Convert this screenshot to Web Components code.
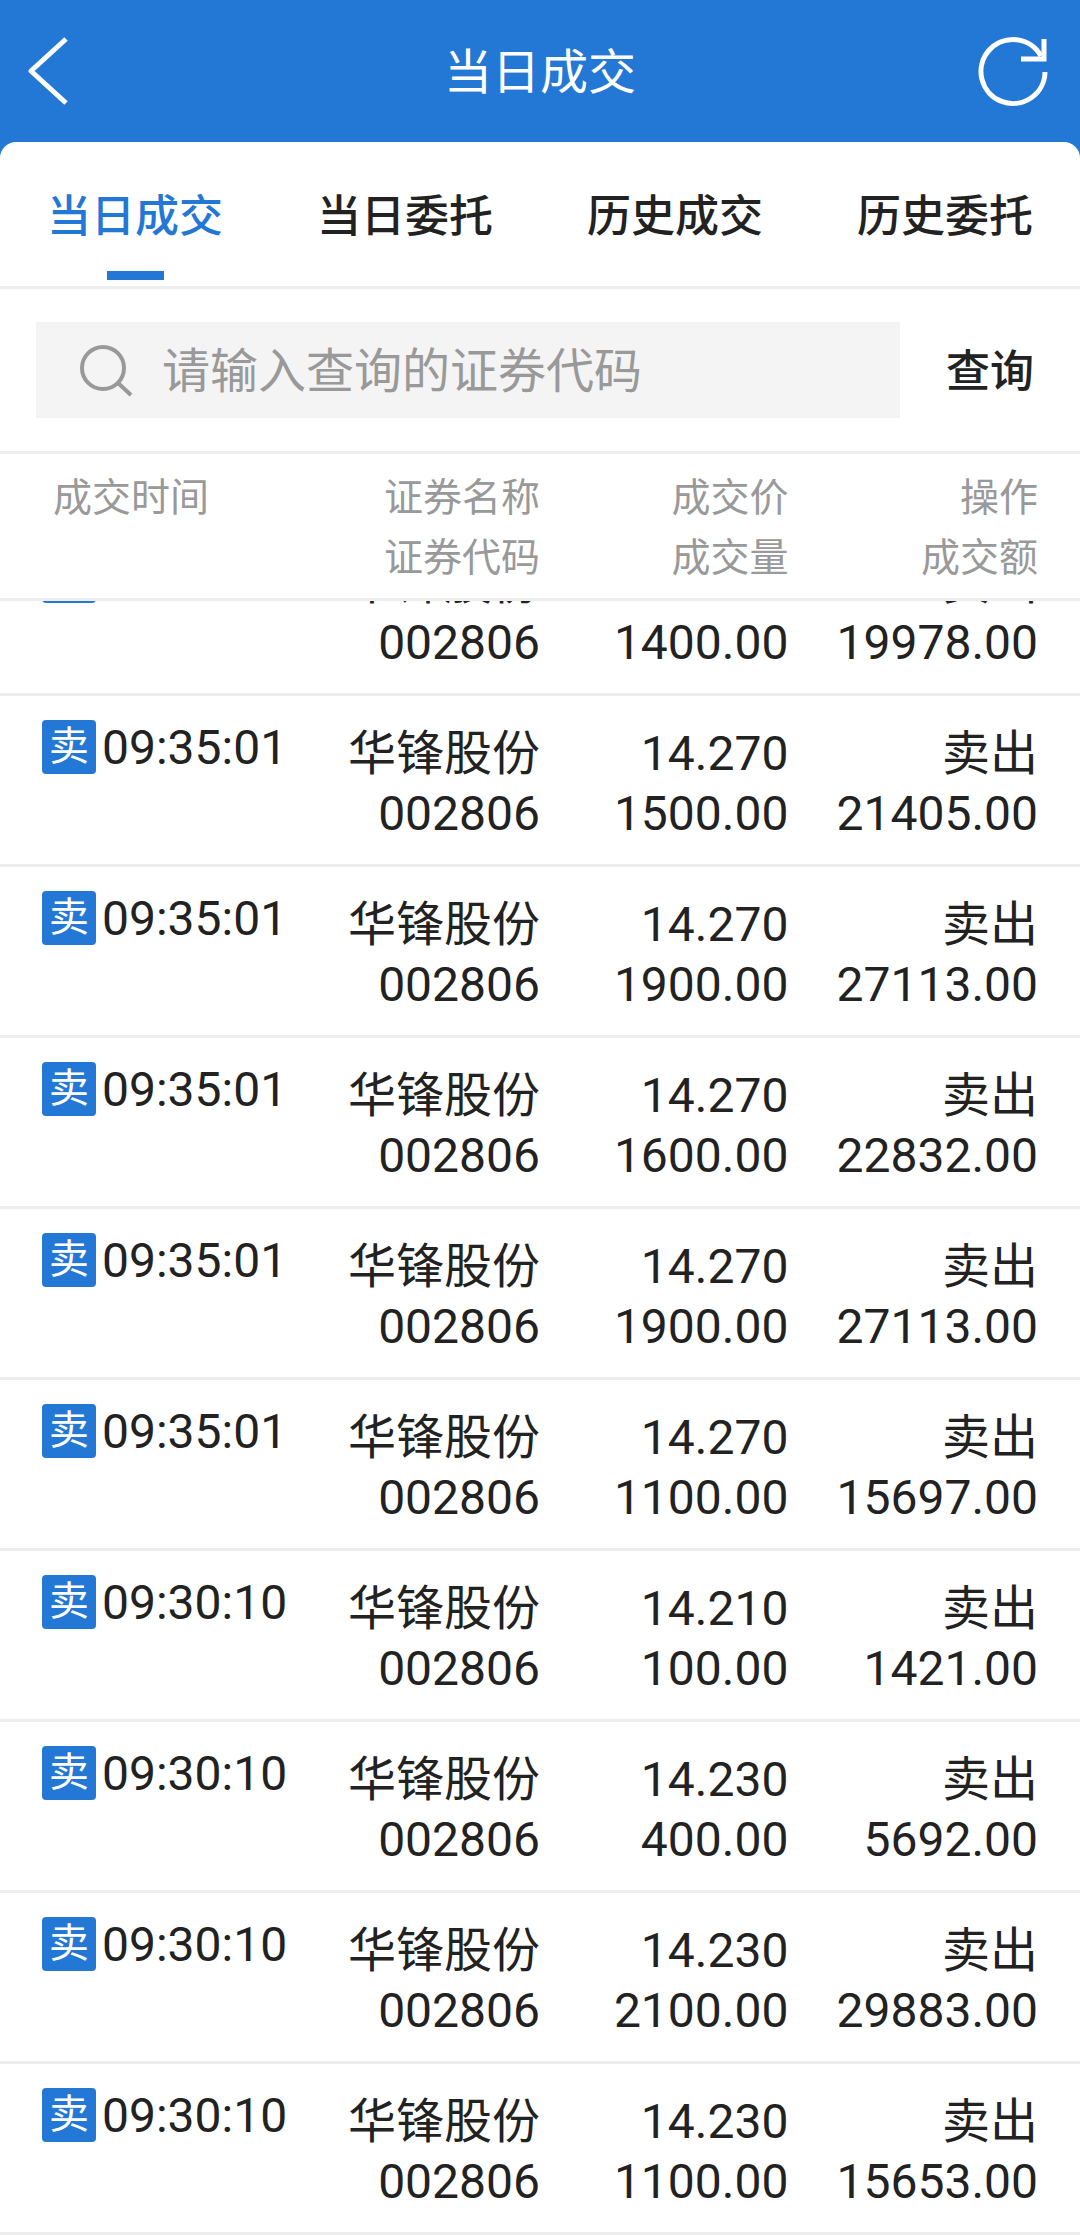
<!DOCTYPE html>
<html lang="zh-CN">
<head>
<meta charset="utf-8">
<meta name="viewport" content="width=device-width, initial-scale=1">
<title>当日成交</title>
<style>
    body {
        margin: 0;
        font-family: Roboto, "Noto Sans CJK SC", sans-serif;
        color: #222;
        --blue: #2478d5;
        --line: #ededed;
        --muted: #999;
    }
</style>
</head>
<body>

<trade-page>
    <title-bar slot="top">当日成交</title-bar>
    <tab-strip active="当日成交"></tab-strip>
    <search-bar placeholder="请输入查询的证券代码">查询</search-bar>
    <deal-table></deal-table>
</trade-page>

<script>
class TradePage extends HTMLElement{
    constructor(){
        super();
        this._shadowRoot = this.attachShadow({mode:'open'});
    }

    connectedCallback(){
        this._shadowRoot.innerHTML = `
        <style>
            :host {
                display: flex;
                flex-direction: column;
                height: 100vh;
                background: var(--blue);
            }

            main {
                display: flex;
                flex-direction: column;
                flex: 1;
                min-height: 0;
                background: #fff;
                border-radius: 16px 16px 0 0;
            }
        </style>

        <slot name="top"></slot>
        <main><slot></slot></main>
        `;
    }
}

window.customElements.define('trade-page', TradePage)


class TitleBar extends HTMLElement{
    constructor(){
        super();
        this._shadowRoot = this.attachShadow({mode:'open'});
    }

    connectedCallback(){
        this._shadowRoot.innerHTML = `
        <style>
            :host {
                display: block;
                color: #fff;
            }

            header {
                display: flex;
                align-items: center;
                justify-content: space-between;
                height: 142px;
                padding: 0 24px;
            }

            h1 {
                margin: 0;
                padding-top: 4px;
                font-weight: 400;
                font-size: 48px;
                line-height: 60px;
            }

            button {
                display: flex;
                border: 0;
                padding: 0;
                background: none;
                color: inherit;
            }

            svg {
                width: 84px;
                height: 84px;
                fill: none;
                stroke: currentColor;
                stroke-width: 5;
            }
        </style>

        <header>
            <button type="button" aria-label="返回">
                <svg viewBox="0 0 84 84"><path d="M42 10 L7 42 L42 74" stroke-linejoin="round"/></svg>
            </button>
            <h1><slot></slot></h1>
            <button type="button" aria-label="刷新">
                <svg viewBox="0 0 84 84">
                    <path d="M73 43 A32 32 0 1 1 69 27"/>
                    <path d="M72 10 V30 H49"/>
                </svg>
            </button>
        </header>
        `;
    }
}

window.customElements.define('title-bar', TitleBar)


class TabStrip extends HTMLElement{
    constructor(){
        super();
        this._shadowRoot = this.attachShadow({mode:'open'});
        this.tabs = ['当日成交', '当日委托', '历史成交', '历史委托'];
    }

    connectedCallback(){
        this._render();
    }

    _render() {
        const active = this.getAttribute('active');
        this._shadowRoot.innerHTML = `
        <style>
            :host {
                display: block;
                border-bottom: 3px solid var(--line);
            }

            nav {
                display: flex;
            }

            button {
                flex: 1;
                display: flex;
                flex-direction: column;
                align-items: center;
                gap: 25px;
                padding: 46px 0 6px;
                border: 0;
                background: none;
                font: inherit;
                font-weight: 500;
                font-size: 44px;
                line-height: 58px;
                color: inherit;
                white-space: nowrap;
            }

            button::after {
                content: '';
                width: 57px;
                height: 9px;
            }

            .active {
                color: var(--blue);
            }

            .active::after {
                background: var(--blue);
            }
        </style>

        <nav role="tablist">
            ${this.tabs.map(label => `<button type="button" role="tab" aria-selected="${label === active}" class="${label === active ? 'active' : ''}">${label}</button>`).join('')}
        </nav>
        `;
    }
}

window.customElements.define('tab-strip', TabStrip)


class SearchBar extends HTMLElement{
    constructor(){
        super();
        this._shadowRoot = this.attachShadow({mode:'open'});
    }

    connectedCallback(){
        const placeholder = this.getAttribute('placeholder');
        this._shadowRoot.innerHTML = `
        <style>
            :host {
                display: block;
                border-bottom: 3px solid var(--line);
            }

            form {
                display: flex;
                align-items: center;
                padding: 33px 0 33px 36px;
            }

            label {
                flex: 1;
                display: flex;
                align-items: center;
                gap: 28px;
                height: 96px;
                padding-left: 42px;
                background: #f4f4f4;
            }

            svg {
                width: 56px;
                height: 56px;
                fill: none;
                stroke: var(--muted);
                stroke-width: 4;
            }

            input {
                flex: 1;
                min-width: 0;
                height: 96px;
                box-sizing: border-box;
                border: 0;
                padding: 2px 0 0;
                background: none;
                outline: none;
                font: inherit;
                font-size: 48px;
                color: inherit;
            }

            input::placeholder {
                color: var(--muted);
            }

            button {
                width: 180px;
                border: 0;
                padding: 4px 0 0;
                background: none;
                font: inherit;
                font-weight: 500;
                font-size: 44px;
                line-height: 60px;
                color: inherit;
            }
        </style>

        <form onsubmit="return false">
            <label for="code">
                <svg viewBox="0 0 56 56" aria-hidden="true">
                    <circle cx="25" cy="26" r="21"/>
                    <path d="M40 41 L53 53"/>
                </svg>
                <input id="code" type="text" aria-label="证券代码" placeholder="${placeholder}">
            </label>
            <button type="submit"><slot></slot></button>
        </form>
        `;
    }
}

window.customElements.define('search-bar', SearchBar)


class SideBadge extends HTMLElement{
    constructor(){
        super();
        this._shadowRoot = this.attachShadow({mode:'open'});
    }

    connectedCallback(){
        this._shadowRoot.innerHTML = `
        <style>
            :host {
                display: block;
                width: 54px;
                border-radius: 4px;
                background: var(--blue);
                color: #fff;
                font-size: 40px;
                line-height: 54px;
                text-align: center;
            }
        </style>

        <slot></slot>
        `;
    }
}

window.customElements.define('side-badge', SideBadge)


class DealTable extends HTMLElement{
    constructor(){
        super();
        this._shadowRoot = this.attachShadow({mode:'open'});

        this.heads = [
            ['成交时间', ''],
            ['证券名称', '证券代码'],
            ['成交价', '成交量'],
            ['操作', '成交额']
          ];

        this.deals = [
            { time: '09:35:01', price: '14.270', volume: '1400.00', amount: '19978.00' },
            { time: '09:35:01', price: '14.270', volume: '1500.00', amount: '21405.00' },
            { time: '09:35:01', price: '14.270', volume: '1900.00', amount: '27113.00' },
            { time: '09:35:01', price: '14.270', volume: '1600.00', amount: '22832.00' },
            { time: '09:35:01', price: '14.270', volume: '1900.00', amount: '27113.00' },
            { time: '09:35:01', price: '14.270', volume: '1100.00', amount: '15697.00' },
            { time: '09:30:10', price: '14.210', volume: '100.00', amount: '1421.00' },
            { time: '09:30:10', price: '14.230', volume: '400.00', amount: '5692.00' },
            { time: '09:30:10', price: '14.230', volume: '2100.00', amount: '29883.00' },
            { time: '09:30:10', price: '14.230', volume: '1100.00', amount: '15653.00' }
          ];
    }

    connectedCallback(){
        this._render();
        const list = this._shadowRoot.querySelector('tbody');
        list.scrollTop = list.scrollHeight;
    }

    _render() {
        this._shadowRoot.innerHTML = `
        <style>
            :host {
                display: flex;
                flex: 1;
                min-height: 0;
            }

            /* only the body scrolls, the head stays above it */
            table {
                display: flex;
                flex-direction: column;
                flex: 1;
                min-height: 0;
            }

            thead {
                display: block;
            }

            tbody {
                display: block;
                flex: 1;
                min-height: 0;
                overflow-y: auto;
                scrollbar-width: none;
            }

            tr {
                display: grid;
                grid-template-columns: 27fr 23fr 23fr 27fr;
                border-bottom: 3px solid var(--line);
            }

            th, td {
                min-width: 0;
                padding: 28px 0 20px;
                text-align: right;
                font-weight: 400;
                font-size: 48px;
                line-height: 60px;
                white-space: nowrap;
            }

            th {
                padding: 14px 0 10px;
                font-size: 39px;
                color: var(--muted);
            }

            th:first-child {
                padding-left: 53px;
                text-align: left;
            }

            td:first-child {
                padding: 24px 0 0 42px;
            }

            th:last-child, td:last-child {
                padding-right: 42px;
            }

            .time {
                display: flex;
                align-items: flex-start;
                gap: 6px;
                line-height: 56px;
            }
        </style>

        <table>
            <thead>
                <tr>${this.heads.map(([first, second]) => `<th scope="col">${first}<br>${second}</th>`).join('')}</tr>
            </thead>
            <tbody>
            ${this.deals.map(({ time, price, volume, amount }) => `
                <tr>
                    <td><div class="time"><side-badge>卖</side-badge>${time}</div></td>
                    <td>华锋股份<br>002806</td>
                    <td>${price}<br>${volume}</td>
                    <td>卖出<br>${amount}</td>
                </tr>`).join('')}
            </tbody>
        </table>
        `;
    }
}

window.customElements.define('deal-table', DealTable)
</script>
</body>
</html>
